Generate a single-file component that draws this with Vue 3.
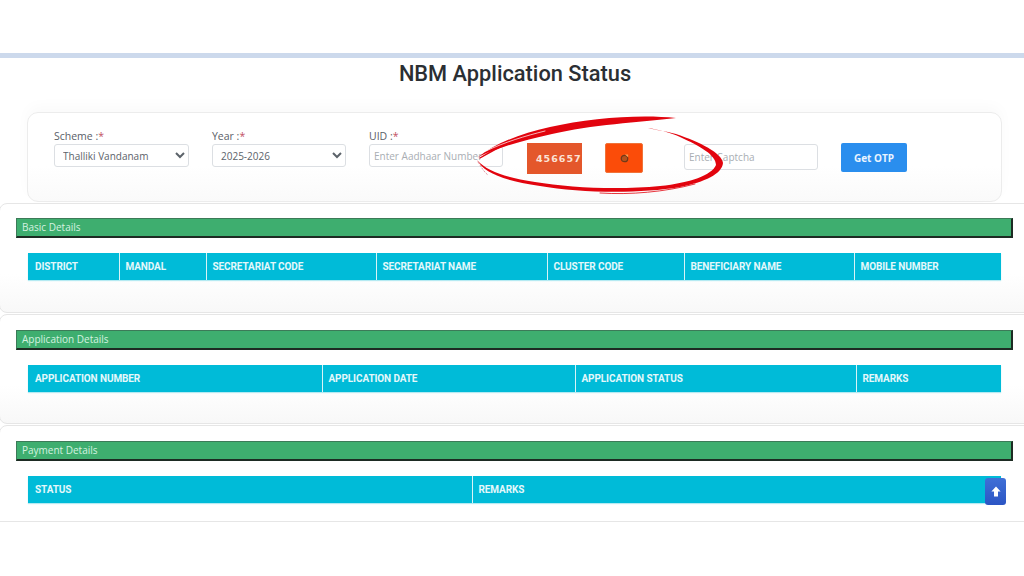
<script setup>
const sections = [
  { title: 'Basic Details', height: 110, cols: [['DISTRICT', 91], ['MANDAL', 87], ['SECRETARIAT CODE', 170], ['SECRETARIAT NAME', 171], ['CLUSTER CODE', 137], ['BENEFICIARY NAME', 170], ['MOBILE NUMBER', 147]] },
  { title: 'Application Details', height: 110, cols: [['APPLICATION NUMBER', 294], ['APPLICATION DATE', 253], ['APPLICATION STATUS', 281], ['REMARKS', 145]] },
  { title: 'Payment Details', height: 97, cols: [['STATUS', 444], ['REMARKS', 529]] }
]
</script>

<template>
  <div class="page">
    <div class="topbar"></div>
    <h1 class="title">NBM Application Status</h1>

    <form class="filter" @submit.prevent>
      <label class="field">
        <span class="lab">Scheme :<i>*</i></span>
        <select class="ctl"><option>Thalliki Vandanam</option></select>
      </label>
      <label class="field">
        <span class="lab">Year :<i>*</i></span>
        <select class="ctl"><option>2025-2026</option></select>
      </label>
      <label class="field">
        <span class="lab">UID :<i>*</i></span>
        <input class="ctl txt" placeholder="Enter Aadhaar Number" />
      </label>
      <div class="captcha">456657</div>
      <button class="refresh" type="button" aria-label="Refresh">
        <svg width="9" height="9" viewBox="0 0 10 10"><circle cx="5" cy="5" r="3.6" fill="#b5521d" stroke="#6e3a1a" stroke-width="1.4"/><path d="M5.5 0.5h3.5v3z" fill="#ffa050"/></svg>
      </button>
      <input class="ctl txt cap-input" placeholder="Enter Captcha" />
      <button class="otp" type="button">Get OTP</button>
    </form>

    <section v-for="s in sections" :key="s.title" class="panel" :style="{ height: s.height + 'px' }">
      <div class="green">{{ s.title }}</div>
      <div class="thead">
        <div v-for="c in s.cols" :key="c[0]" class="th" :style="{ width: c[1] + 'px' }">{{ c[0] }}</div>
      </div>
    </section>

    <button class="up" type="button" aria-label="Back to top">
      <svg width="10" height="11" viewBox="0 0 10 11"><path d="M5 0.5L9.6 5.5H7V10.5H3V5.5H0.4Z" fill="#fff"/></svg>
    </button>

    <svg class="scribble" width="1024" height="576" viewBox="0 0 1024 576">
      <g fill="#e2040e">
        <path d="M676 118C640 114 590 118 550 127C520 134 495 143 477 158C490 150 520 141 552 134C590 125 640 122 676 118Z"/>
        <path d="M477 160C484 172 500 180 540 186C580 193 640 194 680 187C705 182 722 174 723 163C722 153 700 142 676 134C665 131 655 130 648 128C660 130 672 133 680 137C700 146 716 155 716 165C712 175 690 183 660 186C620 190 570 188 535 182C505 177 488 172 477 160Z"/>
      </g>
      <g fill="none" stroke-linecap="round">
        <path d="M486 151C505 142 525 136 545 131" stroke="#fff" stroke-width="0.7"/>
        <path d="M480 158C496 148 512 141 530 137" stroke="#e2040e" stroke-width="1.2"/>
        <path d="M600 193C630 195 665 192 695 184" stroke="#e2040e" stroke-width="0.8"/>
        <path d="M478 162C482 168 484 172 488 175" stroke="#d9808a" stroke-width="0.8" stroke-dasharray="1.5 2"/>
      </g>
    </svg>
  </div>
</template>

<style scoped>
.page {
  position: relative;
  width: 1024px;
  height: 576px;
  overflow: hidden;
  background: #fff;
  padding-top: 53px;
  box-sizing: border-box;
  font-family: "Open Sans", sans-serif;
}
.topbar { height: 5px; background: #ccd9ec; }
.title {
  margin: 0;
  height: 54px;
  padding: 3px 0 0 6px;
  box-sizing: border-box;
  text-align: center;
  font: 500 21.8px/26px Roboto, sans-serif;
  color: #2b2f33;
}
.filter {
  height: 90px;
  margin: 0 22px 0 27px;
  padding: 0 0 0 26px;
  box-sizing: border-box;
  display: flex;
  align-items: flex-start;
  background: linear-gradient(#fff 60%, #fafafa);
  border: 1px solid #ececec;
  border-radius: 11px;
  box-shadow: 0 -6px 14px rgba(0, 0, 0, 0.025);
}
.field { display: flex; flex-direction: column; width: 134px; margin-right: 23px; padding-top: 16px; }
.field:first-child { width: 135px; }
.lab { font-size: 10.5px; line-height: 14px; color: #5a6068; height: 15px; }
.lab i { color: #c2505f; font-style: normal; }
.ctl {
  height: 23px;
  width: 100%;
  box-sizing: border-box;
  border: 1px solid #dcdfe3;
  border-radius: 3px;
  background: #fff;
  font: 10px "Open Sans", sans-serif;
  color: #5c636a;
  padding: 0 0 0 4px;
}
.txt { padding-left: 4px; outline: none; }
.txt::placeholder { color: #a9aeb3; opacity: 1; }
.captcha {
  width: 55px;
  height: 31px;
  margin: 30px 23px 0 1px;
  padding-left: 9px;
  box-sizing: border-box;
  background: #e4572b;
  color: #fbe3d6;
  font: 700 9.5px/31px "DejaVu Sans", sans-serif;
  letter-spacing: 1px;
  white-space: nowrap;
}
.refresh {
  width: 38px;
  height: 30px;
  margin: 30px 41px 0 0;
  padding: 0;
  border: 1px solid #f0733a;
  border-radius: 2px;
  background: #fb4c09;
  display: flex;
  align-items: center;
  justify-content: center;
}
.cap-input { width: 134px; margin: 31px 23px 0 0; height: 26px; }
.otp {
  width: 66px;
  height: 29px;
  margin-top: 30px;
  padding: 0;
  border: 0;
  border-radius: 2px;
  background: #2a8eee;
  color: #eaf4ff;
  font: 700 10px "Open Sans", sans-serif;
}
.panel {
  margin: 1px -8px 0 -1px;
  padding: 14px 0 0 16px;
  box-sizing: border-box;
  background: linear-gradient(#fff 65%, #f8f8f8);
  border: 1px solid #e6e6e6;
  border-radius: 8px;
}
.panel + .panel { padding-top: 15px; }
.panel:last-of-type { border-radius: 8px 8px 0 0; background: #fff; }
.green {
  width: 997px;
  height: 20px;
  box-sizing: border-box;
  padding-left: 5px;
  border-style: solid;
  border-width: 1px 2px 2px 1px;
  border-color: #3c7a58 #1d2b23 #1d2b23 #3c7a58;
  background: #3eae6f;
  color: #d5f2e0;
  font-size: 10px;
  line-height: 17px;
}
.thead {
  display: flex;
  width: 973px;
  height: 27px;
  margin: 15px 0 0 12px;
  background: #00bbd8;
  box-shadow: 0 1px 1px #b5eaf2;
}
.th {
  box-sizing: border-box;
  padding-left: 5.5px;
  border-left: 1px solid #d9f3f7;
  color: #e4f8fb;
  font: 700 10px/27px Roboto, sans-serif;
  letter-spacing: -0.1px;
  white-space: nowrap;
}
.th:first-child { border-left: 0; padding-left: 7px; }
.up {
  position: absolute;
  left: 985px;
  top: 478px;
  width: 21px;
  height: 27px;
  padding: 0;
  border: 0;
  border-radius: 3px;
  background: linear-gradient(#3f6fd6, #2b55c4);
  display: flex;
  align-items: center;
  justify-content: center;
}
.scribble { position: absolute; left: 0; top: 0; pointer-events: none; }
</style>
